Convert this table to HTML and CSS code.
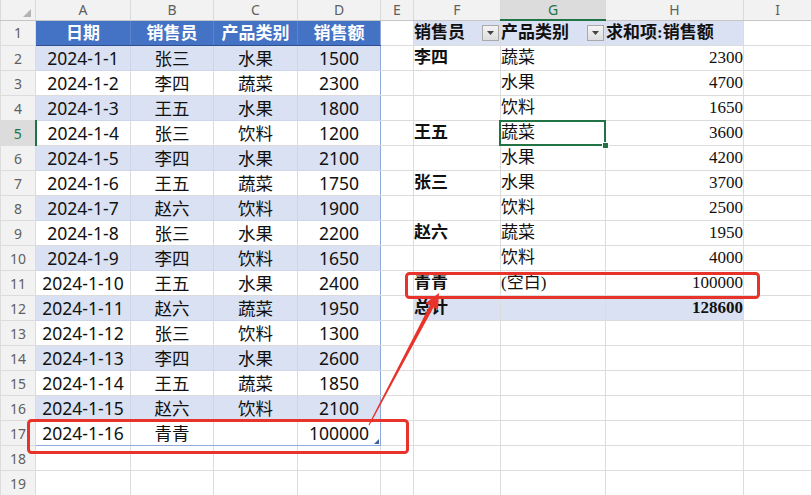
FILE: index.html
```html
<!DOCTYPE html>
<html lang="zh-CN">
<head>
<meta charset="utf-8">
<title>数据透视表</title>
<link rel="stylesheet" href="styles.css">
</head>
<body>
<table class="sheet">
  <colgroup>
    <col class="w-rh"><col class="w-a"><col class="w-b"><col class="w-c"><col class="w-d"><col class="w-e"><col class="w-f"><col class="w-g"><col class="w-h"><col class="w-i">
  </colgroup>
  <thead>
    <tr class="colhead">
      <th class="corner"><svg width="10" height="10" viewBox="0 0 10 10"><polygon points="9,1 9,9 1,9" fill="#b3b3b3"/></svg></th>
      <th>A</th><th>B</th><th>C</th><th>D</th><th>E</th><th>F</th><th class="act">G</th><th>H</th><th>I</th>
    </tr>
  </thead>
  <tbody>
    <tr>
      <th class="rh">1</th>
      <td class="t hd">日期</td><td class="t hd">销售员</td><td class="t hd">产品类别</td><td class="t hd re">销售额</td>
      <td></td>
      <td class="pv pvh"><div class="pvhd"><span>销售员</span><span class="dd"><svg width="7" height="4" viewBox="0 0 7 4"><polygon points="0,0 7,0 3.5,4" fill="#444"/></svg></span></div></td>
      <td class="pv pvh"><div class="pvhd"><span>产品类别</span><span class="dd"><svg width="7" height="4" viewBox="0 0 7 4"><polygon points="0,0 7,0 3.5,4" fill="#444"/></svg></span></div></td>
      <td class="pv pvh"><div class="pvhd"><span>求和项:销售额</span></div></td>
      <td></td>
    </tr>
    <tr>
      <th class="rh">2</th>
      <td class="t b">2024-1-1</td><td class="t b">张三</td><td class="t b">水果</td><td class="t b re">1500</td>
      <td></td>
      <td class="pv lab">李四</td><td class="pv">蔬菜</td><td class="pv num">2300</td>
      <td></td>
    </tr>
    <tr>
      <th class="rh">3</th>
      <td class="t">2024-1-2</td><td class="t">李四</td><td class="t">蔬菜</td><td class="t re">2300</td>
      <td></td>
      <td class="pv lab"></td><td class="pv">水果</td><td class="pv num">4700</td>
      <td></td>
    </tr>
    <tr>
      <th class="rh">4</th>
      <td class="t b">2024-1-3</td><td class="t b">王五</td><td class="t b">水果</td><td class="t b re">1800</td>
      <td></td>
      <td class="pv lab"></td><td class="pv">饮料</td><td class="pv num">1650</td>
      <td></td>
    </tr>
    <tr>
      <th class="rh act">5</th>
      <td class="t">2024-1-4</td><td class="t">张三</td><td class="t">饮料</td><td class="t re">1200</td>
      <td></td>
      <td class="pv lab sep">王五</td><td class="pv sel">蔬菜</td><td class="pv num">3600</td>
      <td></td>
    </tr>
    <tr>
      <th class="rh">6</th>
      <td class="t b">2024-1-5</td><td class="t b">李四</td><td class="t b">水果</td><td class="t b re">2100</td>
      <td></td>
      <td class="pv lab"></td><td class="pv">水果</td><td class="pv num">4200</td>
      <td></td>
    </tr>
    <tr>
      <th class="rh">7</th>
      <td class="t">2024-1-6</td><td class="t">王五</td><td class="t">蔬菜</td><td class="t re">1750</td>
      <td></td>
      <td class="pv lab sep">张三</td><td class="pv">水果</td><td class="pv num">3700</td>
      <td></td>
    </tr>
    <tr>
      <th class="rh">8</th>
      <td class="t b">2024-1-7</td><td class="t b">赵六</td><td class="t b">饮料</td><td class="t b re">1900</td>
      <td></td>
      <td class="pv lab"></td><td class="pv">饮料</td><td class="pv num">2500</td>
      <td></td>
    </tr>
    <tr>
      <th class="rh">9</th>
      <td class="t">2024-1-8</td><td class="t">张三</td><td class="t">水果</td><td class="t re">2200</td>
      <td></td>
      <td class="pv lab sep">赵六</td><td class="pv">蔬菜</td><td class="pv num">1950</td>
      <td></td>
    </tr>
    <tr>
      <th class="rh">10</th>
      <td class="t b">2024-1-9</td><td class="t b">李四</td><td class="t b">饮料</td><td class="t b re">1650</td>
      <td></td>
      <td class="pv lab"></td><td class="pv">饮料</td><td class="pv num">4000</td>
      <td></td>
    </tr>
    <tr>
      <th class="rh">11</th>
      <td class="t">2024-1-10</td><td class="t">王五</td><td class="t">水果</td><td class="t re">2400</td>
      <td></td>
      <td class="pv lab sep">青青</td><td class="pv">(空白)</td><td class="pv num">100000</td>
      <td></td>
    </tr>
    <tr>
      <th class="rh">12</th>
      <td class="t b">2024-1-11</td><td class="t b">赵六</td><td class="t b">蔬菜</td><td class="t b re">1950</td>
      <td></td>
      <td class="pv lab tot">总计</td><td class="pv tot"></td><td class="pv num tot strong">128600</td>
      <td></td>
    </tr>
    <tr>
      <th class="rh">13</th>
      <td class="t">2024-1-12</td><td class="t">张三</td><td class="t">饮料</td><td class="t re">1300</td>
      <td></td><td></td><td></td><td></td><td></td>
    </tr>
    <tr>
      <th class="rh">14</th>
      <td class="t b">2024-1-13</td><td class="t b">李四</td><td class="t b">水果</td><td class="t b re">2600</td>
      <td></td><td></td><td></td><td></td><td></td>
    </tr>
    <tr>
      <th class="rh">15</th>
      <td class="t">2024-1-14</td><td class="t">王五</td><td class="t">蔬菜</td><td class="t re">1850</td>
      <td></td><td></td><td></td><td></td><td></td>
    </tr>
    <tr>
      <th class="rh">16</th>
      <td class="t b">2024-1-15</td><td class="t b">赵六</td><td class="t b">饮料</td><td class="t b re">2100</td>
      <td></td><td></td><td></td><td></td><td></td>
    </tr>
    <tr>
      <th class="rh">17</th>
      <td class="t last">2024-1-16</td><td class="t last">青青</td><td class="t last"></td><td class="t last re grip">100000</td>
      <td></td><td></td><td></td><td></td><td></td>
    </tr>
    <tr>
      <th class="rh">18</th>
      <td></td><td></td><td></td><td></td><td></td><td></td><td></td><td></td><td></td>
    </tr>
    <tr>
      <th class="rh">19</th>
      <td></td><td></td><td></td><td></td><td></td><td></td><td></td><td></td><td></td>
    </tr>
  </tbody>
</table>

<svg class="annot" width="811" height="495" viewBox="0 0 811 495">
  <rect x="28.5" y="420.5" width="379" height="32" rx="3" ry="3" fill="none" stroke="#e8332b" stroke-width="3"/>
  <rect x="406.5" y="273.5" width="352" height="24" rx="3" ry="3" fill="none" stroke="#e8332b" stroke-width="3"/>
  <polygon points="368.5,424.8 429.9,305.2 425.4,303.2 439,293 438.0,309.9 433.6,307.2 369.5,425.2" fill="#e8332b"/>
</svg>
</body>
</html>
```

FILE: styles.css
```css
html, body {
  margin: 0;
  padding: 0;
  background: #ffffff;
}

body {
  position: relative;
  width: 811px;
  height: 495px;
  overflow: hidden;
  font-family: "Noto Sans", "Noto Sans CJK SC", sans-serif;
}

.sheet {
  border-collapse: collapse;
  table-layout: fixed;
  width: 811px;
}

.w-rh { width: 35px; }
.w-a { width: 95px; }
.w-b { width: 83px; }
.w-c { width: 84px; }
.w-d { width: 83px; }
.w-e { width: 33px; }
.w-f { width: 87px; }
.w-g { width: 105px; }
.w-h { width: 138px; }
.w-i { width: 68px; }

.sheet td,
.sheet th {
  padding: 0;
  border: 1px solid #dcdcdc;
  white-space: nowrap;
  overflow: hidden;
}

.sheet tbody tr {
  height: 25px;
}

.colhead {
  height: 20px;
}

.colhead th {
  background: #f2f2f2;
  color: #5f5f5f;
  font-weight: normal;
  font-size: 14px;
  line-height: 18px;
  border-color: #dadada;
  border-bottom-color: #c6c6c6;
  border-top: none;
}

.colhead th.corner {
  text-align: right;
  vertical-align: bottom;
  padding: 0 3px 2px 0;
}

.colhead th.corner svg {
  display: block;
  margin-left: auto;
}

.colhead th.act {
  background: #dcdcdc;
  color: #217346;
  border-bottom: 2px solid #217346;
}

.rh {
  background: #f2f2f2;
  color: #5f5f5f;
  font-weight: normal;
  font-size: 14px;
  text-align: center;
  border-left: none;
  border-right-color: #c6c6c6;
  border-color: #dadada;
}

.rh.act {
  background: #dcdcdc;
  color: #217346;
  border-right: 2px solid #217346;
}

/* data table */
.t {
  font-size: 17.5px;
  color: #111;
  text-align: center;
  line-height: 24px;
}

.t.hd {
  background: #4472c4;
  color: #ffffff;
  font-weight: bold;
  font-size: 17px;
  border-color: #5b82ca;
  border-bottom-color: #2f4f8a;
}

.t.b {
  background: #d9e1f2;
  border-color: #cdd6ea;
}

.t.re {
  border-right-color: #8ea9db;
}

.t.last {
  border-bottom-color: #8ea9db;
}

.grip {
  position: relative;
}

.grip::after {
  content: "";
  position: absolute;
  right: 1px;
  bottom: 1px;
  width: 0;
  height: 0;
  border-left: 5px solid transparent;
  border-bottom: 5px solid #3f5f9f;
}

/* pivot table */
.pv {
  font-family: "Liberation Serif", "Noto Sans CJK SC", serif;
  font-size: 17px;
  color: #111;
  line-height: 24px;
  padding-left: 3px;
}

.pvh {
  background: #d9e1f2;
  font-weight: bold;
}

.pvhd {
  display: flex;
  align-items: center;
  justify-content: space-between;
}

.dd {
  display: flex;
  align-items: center;
  justify-content: center;
  width: 15px;
  height: 14px;
  margin-right: 1px;
  background: linear-gradient(#f4f4f4, #dedede);
  border: 1px solid #a9a9a9;
}

.lab {
  font-weight: bold;
}

.sep {
  border-top-color: #9aa6c6;
}

.num {
  text-align: right;
  padding-left: 0;
  padding-right: 3px;
}

.tot {
  background: #d9e1f2;
  border-color: #cfd7ea;
}

.strong {
  font-weight: bold;
}

.sheet td.sel {
  position: relative;
  overflow: visible;
}

.sel::before {
  content: "";
  position: absolute;
  left: -2px;
  top: -1px;
  right: -1px;
  bottom: -1px;
  border: 2px solid #217346;
  pointer-events: none;
}

.sel::after {
  content: "";
  position: absolute;
  right: -4px;
  bottom: -4px;
  width: 5px;
  height: 5px;
  background: #217346;
  border: 1px solid #ffffff;
}

/* annotation overlay */
.annot {
  position: absolute;
  left: 0;
  top: 0;
  pointer-events: none;
}
```
